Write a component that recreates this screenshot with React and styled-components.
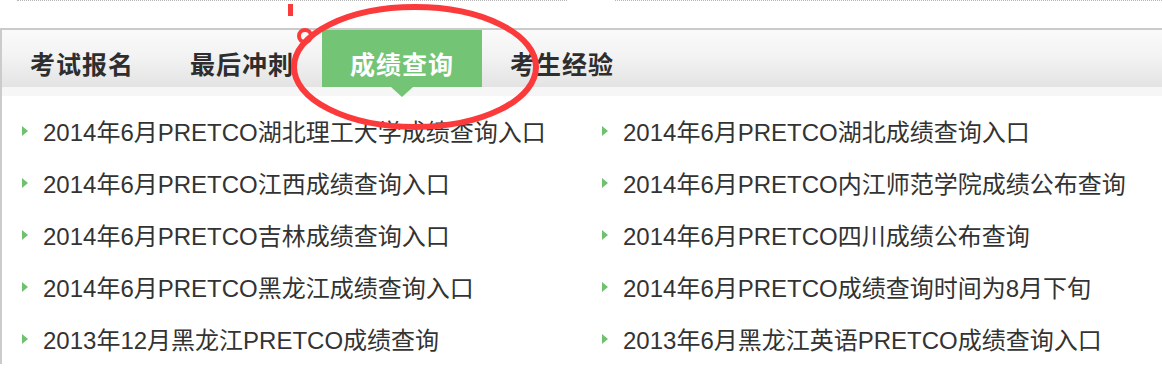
import React from 'react'
import styled, { createGlobalStyle } from 'styled-components'

const GlobalStyle = createGlobalStyle`
  body {
    margin: 0;
    background: #fff;
    font-family: "Liberation Sans", "Noto Sans CJK SC", sans-serif;
  }
`

const Page = styled.div`
  position: relative;
  width: 1162px;
  height: 372px;
  overflow: hidden;
`

const TopRow = styled.div`
  display: flex;
  height: 28px;
`

const TopBlock = styled.div`
  border-top: 1px dotted #b5b5b5;
  margin-left: ${p => p.offset}px;
  width: ${p => p.width}px;
  height: 0;
`

const Panel = styled.div`
  border-top: 2px solid #cbcbcb;
  border-left: 2px solid #cbcbcb;
`

const TabBar = styled.div`
  display: flex;
  height: 57px;
  background: linear-gradient(to bottom, #fafafa 0%, #f3f3f3 45%, #e3e3e3 100%);
  border-bottom: 9px solid #f6f6f6;
`

const Tab = styled.div`
  position: relative;
  width: 160px;
  height: 57px;
  display: flex;
  align-items: center;
  justify-content: center;
  padding-top: 8px;
  box-sizing: border-box;
  font-family: "Noto Sans CJK SC", sans-serif;
  font-weight: 700;
  font-size: 25px;
  letter-spacing: 1px;
  color: ${p => (p.active ? '#fff' : '#2e2e2e')};
  background: ${p => (p.active ? '#74c475' : 'transparent')};

  &::after {
    content: '';
    display: ${p => (p.active ? 'block' : 'none')};
    position: absolute;
    left: 50%;
    bottom: -10px;
    margin-left: -11px;
    border-top: 10px solid #74c475;
    border-left: 11px solid transparent;
    border-right: 11px solid transparent;
  }
`

const List = styled.ul`
  display: grid;
  grid-template-columns: 580px 580px;
  margin: 0;
  padding: 8px 0 0 0;
  list-style: none;
`

const Item = styled.li`
  display: flex;
  align-items: center;
  height: 52px;
  padding-left: 20px;
  font-size: 24px;
  color: #333;
  white-space: nowrap;
`

const Bullet = styled.span`
  width: 0;
  height: 0;
  border-left: 6px solid #6fc16f;
  border-top: 5px solid transparent;
  border-bottom: 5px solid transparent;
  margin-right: 15px;
  margin-top: 1px;
`

const Mark = styled.svg`
  position: absolute;
  left: 0;
  top: 0;
  pointer-events: none;
`

const tabs = ['考试报名', '最后冲刺', '成绩查询', '考生经验']

const links = [
  '2014年6月PRETCO湖北理工大学成绩查询入口',
  '2014年6月PRETCO湖北成绩查询入口',
  '2014年6月PRETCO江西成绩查询入口',
  '2014年6月PRETCO内江师范学院成绩公布查询',
  '2014年6月PRETCO吉林成绩查询入口',
  '2014年6月PRETCO四川成绩公布查询',
  '2014年6月PRETCO黑龙江成绩查询入口',
  '2014年6月PRETCO成绩查询时间为8月下旬',
  '2013年12月黑龙江PRETCO成绩查询',
  '2013年6月黑龙江英语PRETCO成绩查询入口',
]

const App = () => (
  <Page>
    <GlobalStyle />
    <TopRow>
      <TopBlock offset={17} width={550} />
      <TopBlock offset={48} width={547} />
    </TopRow>
    <Panel>
      <TabBar>
        {tabs.map((t, i) => (
          <Tab key={t} active={i === 2}>{t}</Tab>
        ))}
      </TabBar>
      <List>
        {links.map(l => (
          <Item key={l}>
            <Bullet />
            {l}
          </Item>
        ))}
      </List>
    </Panel>
    <Mark width="1162" height="372" viewBox="0 0 1162 372">
      <rect x="288" y="4" width="5" height="12" fill="#fb3b3b" />
      <ellipse cx="415" cy="67" rx="121" ry="60" fill="none" stroke="#fb3b3b" strokeWidth="6" />
      <circle cx="305" cy="36" r="6" fill="none" stroke="#fb3b3b" strokeWidth="4" />
    </Mark>
  </Page>
)

export default App
